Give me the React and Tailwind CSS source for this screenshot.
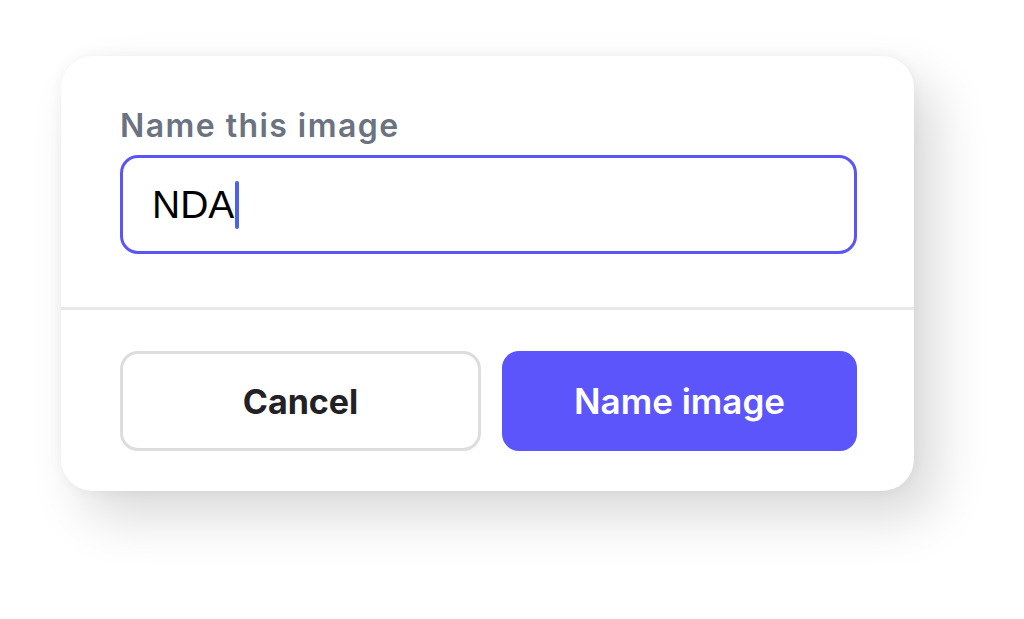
import React, { useState } from 'react';

export default function App() {
  const [name, setName] = useState('NDA');

  return (
    <div className="w-[1024px] h-[619px] bg-white overflow-hidden pt-[56px] pl-[61px]" style={{ fontFamily: 'Inter, "Liberation Sans", sans-serif' }}>
      <div className="w-[853px] bg-white rounded-[32px] shadow-[22px_26px_52px_rgba(0,0,0,0.15),0_0_14px_rgba(0,0,0,0.05)]">
        <div className="pl-[59px] pr-[57px] pt-[51px] pb-[53px]">
          <label className="block text-[32px] leading-[37px] font-semibold tracking-[0.045em] text-[#6b7280]">Name this image</label>
          <div className="mt-[11px] h-[99px] border-[3px] border-[#5b55f6] rounded-[18px] flex items-center pl-[29px]">
            <span className="text-[39px] text-black leading-none" style={{ fontFamily: '"Liberation Sans", Arial, sans-serif' }}>
              {name}
            </span>
            <span className="ml-px w-[4px] h-[48px] rounded-full bg-[#4a63ea]" />
          </div>
        </div>
        <div className="h-[3px] bg-[#e8e8ec]" />
        <div className="pl-[59px] pr-[57px] pt-[41px] pb-[40px] flex gap-[21px]">
          <button
            type="button"
            onClick={() => setName('')}
            className="flex-1 h-[100px] border-[3px] border-[#dcdce1] rounded-[18px] bg-white text-[34px] font-bold text-[#222226]"
          >
            Cancel
          </button>
          <button
            type="button"
            className="flex-1 h-[100px] rounded-[17px] bg-[#5b55fb] text-[35px] font-semibold text-white"
          >
            Name image
          </button>
        </div>
      </div>
    </div>
  );
}
